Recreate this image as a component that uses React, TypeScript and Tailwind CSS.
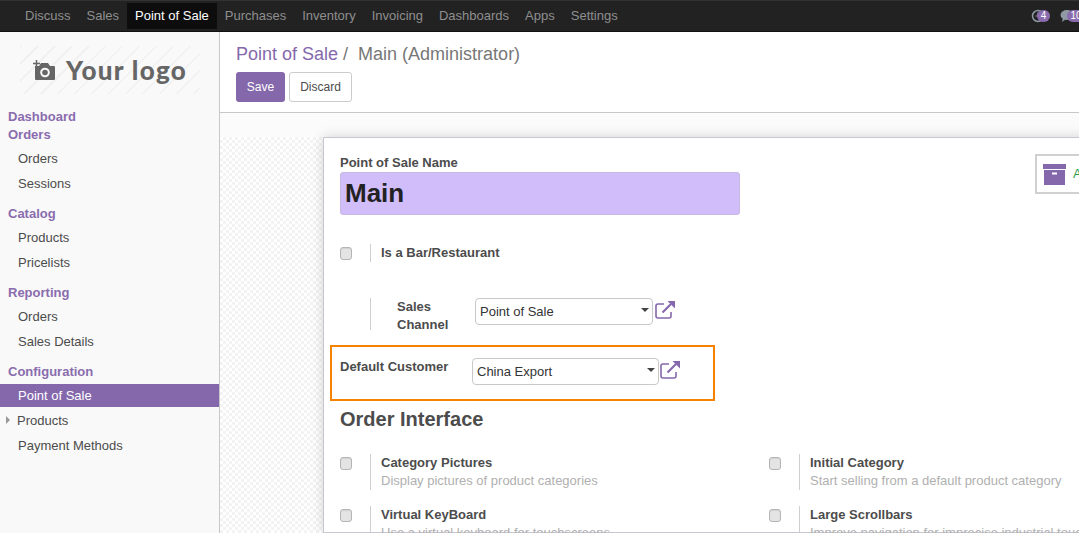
import React from 'react';

const navItems = ['Discuss', 'Sales', 'Point of Sale', 'Purchases', 'Inventory', 'Invoicing', 'Dashboards', 'Apps', 'Settings'];

const Checkbox = () => (
  <span className="block w-[12px] h-[13px] rounded-[3px] border border-[#b5b5b5] bg-[#e4e4e4] shadow-[inset_0_1px_1px_rgba(0,0,0,0.08)]" />
);

const Select = ({ value, width }: { value: string; width: string }) => (
  <div className={`${width} h-[27px] flex items-center justify-between pl-[4px] pr-[3px] bg-white border border-[#c9c9c9] rounded-[4px] text-[13px] text-[#333]`}>
    <span>{value}</span>
    <span className="w-0 h-0 mb-[3px] border-x-[4px] border-x-transparent border-t-[4px] border-t-[#444]" />
  </div>
);

// fa-external-link style glyph
const OpenLink = ({ className = '' }: { className?: string }) => (
  <svg width="20" height="18" viewBox="0 0 20 18" className={`shrink-0 mt-[3px] ${className}`}>
    <path d="M9 3H3A2 2 0 0 0 1 5v10a2 2 0 0 0 2 2h11a2 2 0 0 0 2-2v-4" fill="none" stroke="#8568ac" strokeWidth="1.600" />
    <path d="M7.500 11.500L16 3" fill="none" stroke="#8568ac" strokeWidth="2.200" />
    <path d="M12.500 0H20v7.500z" fill="#8568ac" />
  </svg>
);

const Setting = ({ title, help }: { title: string; help: string }) => (
  <div className="flex w-[429px] h-[36px]">
    <div className="w-[30px] pt-[3px]">
      <Checkbox />
    </div>
    <div className="pl-[10px] border-l border-[#cfcfcf] text-[13px] leading-[18px]">
      <div className="font-bold text-[#4c4c4c]">{title}</div>
      <div className="text-[#b0b0b0] whitespace-nowrap">{help}</div>
    </div>
  </div>
);

const MenuHead = ({ children, className = '' }: { children: React.ReactNode; className?: string }) => (
  <div className={`pl-[8px] h-[18px] leading-[18px] text-[13px] font-bold text-[#8a6cae] ${className}`}>{children}</div>
);

const MenuItem = ({ children, className = '' }: { children: React.ReactNode; className?: string }) => (
  <div className={`pl-[18px] h-[25px] leading-[25px] text-[13px] text-[#4c4c4c] ${className}`}>{children}</div>
);

export default function App() {
  return (
    <div className="w-[1079px] h-[533px] overflow-hidden flex flex-col bg-white font-['Liberation_Sans',Arial,sans-serif]">
      {/* top nav */}
      <header className="relative h-[32px] shrink-0 flex items-center pl-[17px] bg-[#222222] border-b border-[#111] border-t border-t-[#333]">
        {navItems.map((item) => (
          <span
            key={item}
            className={`h-[26px] leading-[26px] px-[8px] text-[13px] ${item === 'Point of Sale' ? 'bg-[#0d0d0d] text-white' : 'text-[#8f8f8f]'}`}
          >
            {item}
          </span>
        ))}
        <div className="ml-auto flex items-center h-full">
          <div className="relative w-[20px] h-[14px] mr-[9px]">
            <svg width="14" height="14" viewBox="0 0 14 14" className="absolute left-0 top-0">
              <circle cx="7" cy="7" r="5.500" fill="none" stroke="#8f9aa5" strokeWidth="1.500" />
              <path d="M7 3.500V7H4.500" fill="none" stroke="#8f9aa5" strokeWidth="1.200" />
            </svg>
            <span className="absolute left-[6px] top-[1px] w-[13px] h-[12px] rounded-full bg-[#8a6cae] text-white text-[10px] leading-[12px] text-center">4</span>
          </div>
          <div className="relative w-[19px] h-[14px]">
            <svg width="14" height="14" viewBox="0 0 14 14" className="absolute left-0 top-0">
              <ellipse cx="7" cy="6" rx="6.500" ry="5" fill="#8f9aa5" />
              <path d="M3 9l-1 4 4-3z" fill="#8f9aa5" />
            </svg>
            <span className="absolute left-[7px] top-[1px] w-[18px] h-[12px] rounded-full bg-[#8a6cae] text-white text-[10px] leading-[12px] text-center">10</span>
          </div>
        </div>
      </header>

      <div className="flex-1 flex min-h-0">
        {/* sidebar */}
        <aside className="w-[220px] shrink-0 bg-[#f9f9f9] border-r border-[#c8c8c8]">
          <div className="mt-[14px] ml-[20px] w-[180px] h-[48px] flex items-center bg-[repeating-linear-gradient(135deg,#f1f1f1_0_1.500px,#f9f9f9_1.500px_12px)]">
            <svg width="22" height="21" viewBox="0 0 22 21" className="ml-[13px] mr-[11px] shrink-0">
              <path d="M2 6h4l2-3h7l2 3h4a1 1 0 0 1 1 1v12a1 1 0 0 1-1 1H3a1 1 0 0 1-1-1z" fill="#666" />
              <circle cx="12" cy="12.500" r="4.800" fill="#f9f9f9" />
              <circle cx="12" cy="12.500" r="2.800" fill="#666" />
              <path d="M3.500 0v7M0 3.500h7" stroke="#666" strokeWidth="1.500" />
            </svg>
            <span className="font-['Lato',sans-serif] font-black text-[26px] leading-[48px] text-[#666] tracking-[1.300px] whitespace-nowrap">Your logo</span>
          </div>
          <MenuHead className="mt-[14px]">Dashboard</MenuHead>
          <MenuHead>Orders</MenuHead>
          <MenuItem className="mt-[2px]">Orders</MenuItem>
          <MenuItem>Sessions</MenuItem>
          <MenuHead className="mt-[9px]">Catalog</MenuHead>
          <MenuItem className="mt-[2px]">Products</MenuItem>
          <MenuItem>Pricelists</MenuItem>
          <MenuHead className="mt-[9px]">Reporting</MenuHead>
          <MenuItem className="mt-[2px]">Orders</MenuItem>
          <MenuItem>Sales Details</MenuItem>
          <MenuHead className="mt-[9px]">Configuration</MenuHead>
          <div className="mt-[3px] pl-[18px] h-[23px] leading-[23px] text-[13px] bg-[#8568ac] text-white">Point of Sale</div>
          <div className="relative mt-[1px]">
            <span className="absolute left-[6px] top-[8px] w-0 h-0 border-y-[4px] border-y-transparent border-l-[4px] border-l-[#999]" />
            <div className="pl-[17px] h-[25px] leading-[25px] text-[13px] text-[#4c4c4c]">Products</div>
          </div>
          <MenuItem>Payment Methods</MenuItem>
        </aside>

        {/* main */}
        <main className="flex-1 min-w-0 flex flex-col">
          <div className="h-[81px] shrink-0 pl-[16px] bg-white border-b border-[#c8c8c8]">
            <div className="pt-[11px] h-[40px] leading-[22px] text-[18px] text-[#8568ac] whitespace-nowrap">
              Point of Sale <span className="text-[#777]">/&nbsp; Main (Administrator)</span>
            </div>
            <div className="flex gap-[4px]">
              <button className="w-[49px] h-[30px] rounded-[3px] bg-[#8568ac] text-white text-[12px]">Save</button>
              <button className="w-[63px] h-[30px] rounded-[3px] bg-white border border-[#ccc] text-[#4c4c4c] text-[12px]">Discard</button>
            </div>
          </div>

          <div className="flex-1 min-h-0 pt-[24px] bg-[#fbfbfb]">
            <div className="h-full pl-[103px] bg-[repeating-conic-gradient(#f3f3f3_0_25%,#ffffff_0_50%)] bg-[length:6px_6px]">
              {/* form sheet */}
              <div className="relative h-full w-[900px] pl-[16px] pt-[16px] bg-white border border-[#c9c6d2] shadow-[0_0_12px_rgba(0,0,0,0.16)]">
                <div className="absolute left-[711px] top-[16px] w-[120px] h-[40px] flex items-center pl-[6px] bg-white border-2 border-[#d0d0d0]">
                  <svg width="23" height="23" viewBox="0 0 23 23" className="shrink-0">
                    <rect x="0" y="1" width="23" height="5" fill="#8568ac" />
                    <path d="M1 7h21v15H1z" fill="#8568ac" />
                    <rect x="9" y="9.500" width="5" height="2" fill="#fff" />
                  </svg>
                  <span className="ml-[7px] text-[13px] text-[#2e9e4f]">Archive</span>
                </div>

                <div className="h-[18px] leading-[17px] text-[13px] font-bold text-[#4c4c4c]">Point of Sale Name</div>
                <div className="w-[400px] h-[43px] pl-[4px] rounded-[3px] bg-[#d2bdfb] border border-[#c8b8e0] text-[26px] leading-[41px] font-bold text-[#222]">Main</div>

                {/* bar toggle */}
                <div className="flex mt-[29px] h-[18px]">
                  <div className="w-[30px] pt-[3px]">
                    <Checkbox />
                  </div>
                  <div className="pl-[10px] border-l border-[#cfcfcf] text-[13px] leading-[18px] font-bold text-[#4c4c4c]">Is a Bar/Restaurant</div>
                </div>

                {/* sales channel */}
                <div className="flex mt-[36px] ml-[30px] h-[32px]">
                  <div className="w-[105px] pl-[26px] border-l border-[#cfcfcf] text-[13px] leading-[18px] font-bold text-[#4c4c4c]">
                    Sales<br />Channel
                  </div>
                  <Select value="Point of Sale" width="w-[178px]" />
                  <OpenLink className="ml-[2px]" />
                </div>

                {/* highlighted field */}
                <div className="flex mt-[15px] -ml-[10px] w-[385px] h-[56px] pl-[8px] pt-[11px] border-2 border-[#f58300]">
                  <div className="w-[132px] text-[13px] leading-[18px] font-bold text-[#4c4c4c]">Default Customer</div>
                  <Select value="China Export" width="w-[187px]" />
                  <OpenLink className="ml-[1px]" />
                </div>

                <div className="mt-[7px] h-[23px] leading-[23px] text-[20px] font-bold text-[#4c4c4c]">Order Interface</div>

                <div className="mt-[23px] flex flex-wrap gap-y-[16px]">
                  <Setting title="Category Pictures" help="Display pictures of product categories" />
                  <Setting title="Initial Category" help="Start selling from a default product category" />
                  <Setting title="Virtual KeyBoard" help="Use a virtual keyboard for touchscreens" />
                  <Setting title="Large Scrollbars" help="Improve navigation for imprecise industrial touchscreens" />
                </div>
              </div>
            </div>
          </div>
        </main>
      </div>
    </div>
  );
}
